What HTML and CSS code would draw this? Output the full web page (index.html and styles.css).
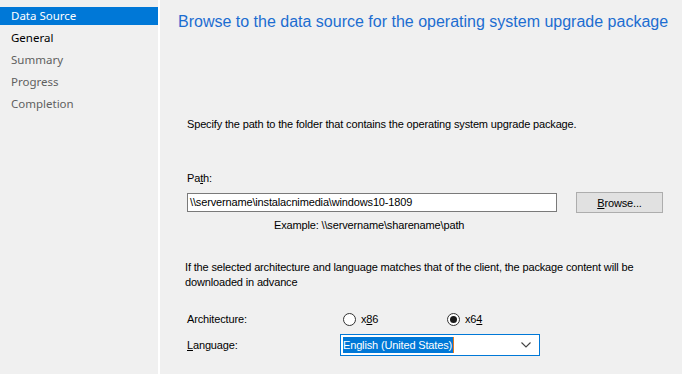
FILE: index.html
```html
<!DOCTYPE html>
<html lang="en">
<head>
    <meta charset="UTF-8">
    <meta name="viewport" content="width=device-width, initial-scale=1.0">
    <title>Upgrade Package Wizard</title>
    <link rel="stylesheet" href="styles.css">
</head>
<body>
    <div class="wizard">
        <nav class="steps">
            <ul>
                <li class="active">Data Source</li>
                <li class="current">General</li>
                <li>Summary</li>
                <li>Progress</li>
                <li>Completion</li>
            </ul>
        </nav>
        <main class="page">
            <h1>Browse to the data source for the operating system upgrade package</h1>
            <div class="form">
                <p class="desc">Specify the path to the folder that contains the operating system upgrade package.</p>

                <label class="path-label">Pa<u>t</u>h:</label>
                <div class="path-row">
                    <div class="textbox">\\servername\instalacnimedia\windows10-1809</div>
                    <button class="btn"><u>B</u>rowse...</button>
                </div>
                <p class="example">Example: \\servername\sharename\path</p>

                <p class="info">If the selected architecture and language matches that of the client, the package content will be<br>downloaded in advance</p>

                <div class="field-row arch">
                    <span class="field-label">Architecture:</span>
                    <div class="radios">
                        <span class="radio"><span class="dot"></span>x<u>8</u>6</span>
                        <span class="radio checked"><span class="dot"></span>x6<u>4</u></span>
                    </div>
                </div>
                <div class="field-row">
                    <span class="field-label"><u>L</u>anguage:</span>
                    <div class="combo">
                        <span class="selected">English (United States)</span>
                        <svg class="chevron" width="10" height="6" viewBox="0 0 10 6">
                            <polyline points="0.5,0.5 5,5 9.5,0.5" fill="none" stroke="#444" stroke-width="1.1"/>
                        </svg>
                    </div>
                </div>
            </div>
        </main>
    </div>
</body>
</html>
```

FILE: styles.css
```css
body {
    margin: 0;
    padding: 0;
    background-color: #f0f0f0;
    font-family: "Liberation Sans", Arial, sans-serif;
    font-size: 11px;
    color: #000;
}
.wizard {
    display: flex;
    height: 374px;
    overflow: hidden;
}
.steps {
    width: 158px;
    border-right: 2px solid #ffffff;
    background-color: #f0f0f0;
    flex-shrink: 0;
}
.steps ul {
    list-style: none;
    margin: 0;
    padding: 7px 0 0 0;
    display: flex;
    flex-direction: column;
    gap: 4px;
}
.steps li {
    height: 18px;
    line-height: 18px;
    padding-left: 11px;
    font-family: "Noto Sans", "Open Sans", sans-serif;
    font-size: 11.5px;
    color: #5f5f5f;
}
.steps li.active {
    background-color: #0078d7;
    color: #ffffff;
}
.steps li.current {
    color: #000000;
}
.page {
    flex: 1;
    padding: 12px 0 0 18px;
}
.page h1 {
    margin: 0;
    font-size: 16px;
    line-height: 20px;
    font-weight: normal;
    color: #1c6dd0;
}
.form {
    padding-left: 9px;
    letter-spacing: -0.15px;
}
.form p {
    margin: 0;
}
.desc {
    margin-top: 85px !important;
    line-height: 14px;
}
.path-label {
    display: block;
    margin-top: 40px;
    line-height: 14px;
}
.path-row {
    display: flex;
    align-items: center;
    gap: 19px;
    margin-top: 7px;
}
.textbox {
    box-sizing: border-box;
    width: 370px;
    height: 19px;
    line-height: 17px;
    padding-left: 2px;
    border: 1px solid #7a7a7a;
    background-color: #ffffff;
}
.btn {
    box-sizing: border-box;
    width: 87px;
    height: 21px;
    padding: 0;
    font-family: inherit;
    font-size: 11px;
    letter-spacing: inherit;
    color: #000;
    background-color: #e1e1e1;
    border: 1px solid #adadad;
}
.example {
    margin-top: 5px !important;
    margin-left: 87px !important;
    line-height: 14px;
}
.info {
    margin-top: 28px !important;
    margin-left: -2px !important;
    line-height: 15px;
}
.field-row {
    display: flex;
    align-items: center;
}
.arch {
    margin-top: 21px;
    height: 16px;
}
.field-label {
    width: 153px;
    flex-shrink: 0;
}
.radios {
    display: flex;
    padding-left: 3px;
}
.radio {
    display: flex;
    align-items: center;
    width: 104px;
}
.dot {
    box-sizing: border-box;
    width: 13px;
    height: 13px;
    border: 1px solid #333;
    border-radius: 50%;
    background-color: #ffffff;
    margin-right: 5px;
    display: flex;
    align-items: center;
    justify-content: center;
}
.radio.checked .dot::after {
    content: "";
    width: 7px;
    height: 7px;
    border-radius: 50%;
    background-color: #1a1a1a;
}
.field-row + .field-row {
    margin-top: 7px;
}
.combo {
    box-sizing: border-box;
    width: 200px;
    height: 22px;
    border: 1px solid #0078d7;
    background-color: #ffffff;
    display: flex;
    align-items: center;
    justify-content: space-between;
    padding: 0 8px 0 2px;
}
.selected {
    background-color: #0078d7;
    color: #ffffff;
    line-height: 16px;
    padding-right: 1px;
    border-right: 1px solid #e87a1c;
}
.chevron {
    display: block;
}
```
